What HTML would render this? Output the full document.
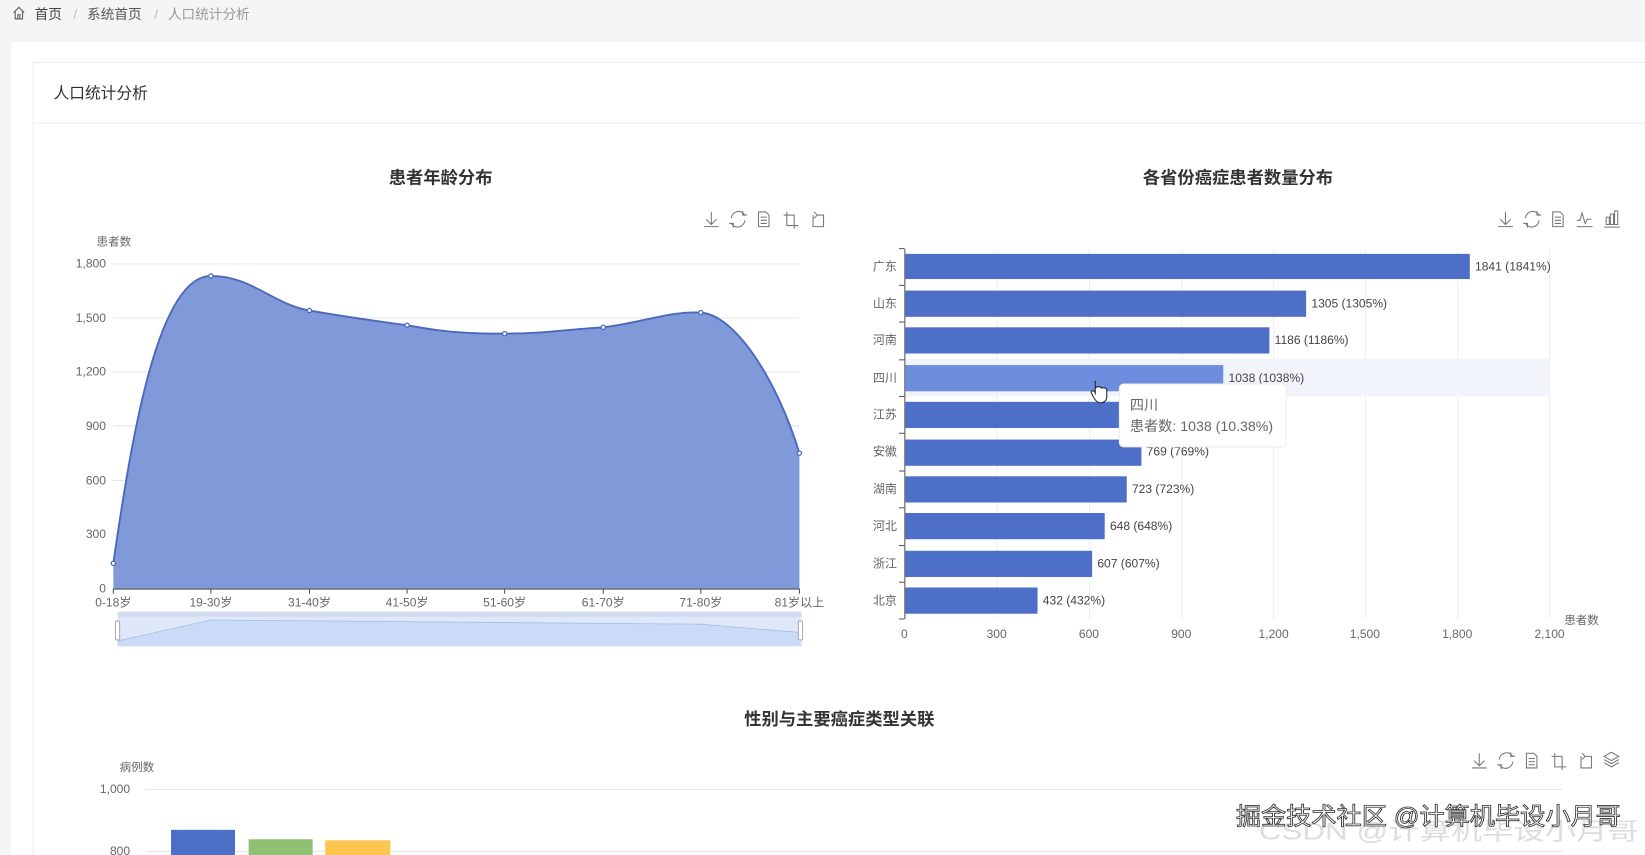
<!DOCTYPE html>
<html><head><meta charset="utf-8"><style>
html,body{margin:0;padding:0;background:#f4f5f7;overflow:hidden;width:1645px;height:855px}
svg{display:block}
text{font-family:"Liberation Sans","Noto Sans CJK SC",sans-serif}
</style></head><body>
<svg width="1645" height="855" viewBox="0 0 1568 815" preserveAspectRatio="none" xmlns="http://www.w3.org/2000/svg">
<rect x="0" y="0" width="1568" height="815" fill="#f4f5f7"/>
<g fill="none" stroke="#666" stroke-width="1.1"><path d="M13,12 L18,7 L23,12 M14.5,11 V18 H21.5 V11 M17,18 V14 H19 V18"/></g>
<g font-size="13">
<text x="33" y="18" fill="#444">首页</text>
<text x="70" y="18" fill="#bbb">/</text>
<text x="83" y="18" fill="#555">系统首页</text>
<text x="147" y="18" fill="#bbb">/</text>
<text x="160" y="18" fill="#999">人口统计分析</text>
</g>
<rect x="11" y="40" width="1570" height="790" fill="#fff"/>
<rect x="31.5" y="59.5" width="1560" height="780" fill="#fff" stroke="#eceef2"/>
<line x1="32" y1="117.5" x2="1568" y2="117.5" stroke="#ebeef5"/>
<text x="51" y="94" font-size="15" fill="#303133">人口统计分析</text>

<text x="420" y="175" font-size="16.5" font-weight="bold" fill="#333" text-anchor="middle">患者年龄分布</text>
<g fill="none" stroke="#777" stroke-width="1">
 <path d="M678,202 V214 M673,209 L678,214 L683,209 M671,216 H685"/>
 <path d="M710,205 A7,7 0 0 0 697,208 M697,213 A7,7 0 0 0 710,210 M708,201 V205 H712 M699,217 V213 H695"/>
 <path d="M723,202 H730 L733,205 V216 H723 Z M725,207 H731 M725,210 H731 M725,213 H731"/>
 <path d="M750,202 V215 H761 M747,205 H757 V218"/>
 <path d="M775,205 V216 H785 V205 H779 M779,205 L776,202 M779,205 L776,208"/>
</g>
<text x="92" y="234" font-size="11" fill="#666">患者数</text>
<g stroke="#e6e6e6" stroke-width="1">
 <line x1="108" y1="251.5" x2="762" y2="251.5"/><line x1="108" y1="303" x2="762" y2="303"/>
 <line x1="108" y1="354.5" x2="762" y2="354.5"/><line x1="108" y1="406" x2="762" y2="406"/>
 <line x1="108" y1="458" x2="762" y2="458"/><line x1="108" y1="509.5" x2="762" y2="509.5"/>
</g>
<g font-size="11.5" fill="#666" text-anchor="end">
 <text x="101" y="255">1,800</text><text x="101" y="307">1,500</text><text x="101" y="358">1,200</text>
 <text x="101" y="410">900</text><text x="101" y="462">600</text><text x="101" y="513">300</text><text x="101" y="565">0</text>
</g>
<path d="M108,537 C125,420 150,263 201,263 C240,263 260,290 295,296 C330,302 350,305 388,310 C420,316 440,318 481,318 C520,318 540,314 575,312 C610,308 640,296 668,298 C700,300 740,360 762,432 L762,561 L108,561 Z" fill="#8099d8"/>
<path d="M108,537 C125,420 150,263 201,263 C240,263 260,290 295,296 C330,302 350,305 388,310 C420,316 440,318 481,318 C520,318 540,314 575,312 C610,308 640,296 668,298 C700,300 740,360 762,432" fill="none" stroke="#4b68bd" stroke-width="1.8"/>
<g fill="#fff" stroke="#4b68bd" stroke-width="1.2">
 <circle cx="108" cy="537" r="2"/><circle cx="201" cy="263" r="2"/><circle cx="295" cy="296" r="2"/><circle cx="388" cy="310" r="2"/>
 <circle cx="481" cy="318" r="2"/><circle cx="575" cy="312" r="2"/><circle cx="668" cy="298" r="2"/><circle cx="762" cy="432" r="2"/>
</g>
<line x1="108" y1="561.5" x2="762" y2="561.5" stroke="#555"/>
<g stroke="#555"><line x1="108" y1="561" x2="108" y2="566"/><line x1="201" y1="561" x2="201" y2="566"/><line x1="295" y1="561" x2="295" y2="566"/><line x1="388" y1="561" x2="388" y2="566"/><line x1="481" y1="561" x2="481" y2="566"/><line x1="575" y1="561" x2="575" y2="566"/><line x1="668" y1="561" x2="668" y2="566"/><line x1="762" y1="561" x2="762" y2="566"/></g>
<g font-size="11.5" fill="#666" text-anchor="middle">
 <text x="108" y="578">0-18岁</text><text x="201" y="578">19-30岁</text><text x="295" y="578">31-40岁</text><text x="388" y="578">41-50岁</text>
 <text x="481" y="578">51-60岁</text><text x="575" y="578">61-70岁</text><text x="668" y="578">71-80岁</text><text x="762" y="578">81岁以上</text>
</g>
<rect x="112" y="583" width="652" height="33" fill="#dfe8f8"/>
<rect x="112" y="583" width="652" height="5" fill="#d3dcee"/>
<path d="M112,611 L201,591 L668,595 L764,603 L764,616 L112,616 Z" fill="#cbdaf7"/>
<path d="M112,611 L201,591 L668,595 L764,603" fill="none" stroke="#a8bde8" stroke-width="0.8"/>
<rect x="110" y="592" width="4" height="18" rx="1" fill="#fff" stroke="#aab"/>
<rect x="761" y="592" width="4" height="18" rx="1" fill="#fff" stroke="#aab"/>

<text x="1180" y="175" font-size="16.5" font-weight="bold" fill="#333" text-anchor="middle">各省份癌症患者数量分布</text>
<g fill="none" stroke="#777" stroke-width="1">
 <path d="M1435,202 V214 M1430,209 L1435,214 L1440,209 M1428,216 H1442"/>
 <path d="M1467,205 A7,7 0 0 0 1454,208 M1454,213 A7,7 0 0 0 1467,210 M1465,201 V205 H1469 M1456,217 V213 H1452"/>
 <path d="M1480,202 H1487 L1490,205 V216 H1480 Z M1482,207 H1488 M1482,210 H1488 M1482,213 H1488"/>
 <path d="M1503,210 H1506 L1508,203 L1511,213 L1513,209 H1517 M1503,216 H1518"/>
 <path d="M1531,207 H1534 V214 H1531 Z M1535,204 H1538 V214 H1535 Z M1539,201 H1542 V214 H1539 Z M1529,216.5 H1544"/>
</g>
<g stroke="#eceef2"><line x1="950.5" y1="237" x2="950.5" y2="590"/><line x1="1038.5" y1="237" x2="1038.5" y2="590"/><line x1="1126.5" y1="237" x2="1126.5" y2="590"/><line x1="1214" y1="237" x2="1214" y2="590"/><line x1="1301.5" y1="237" x2="1301.5" y2="590"/><line x1="1389.5" y1="237" x2="1389.5" y2="590"/><line x1="1477" y1="237" x2="1477" y2="590"/></g>
<rect x="862" y="342" width="615" height="36" fill="#f1f4fa"/>
<g fill="#4d6fc8">
 <rect x="863" y="242" width="538" height="24"/><rect x="863" y="277" width="382" height="25"/><rect x="863" y="312" width="347" height="25"/>
 <rect x="863" y="348" width="303" height="25" fill="#6d8ddf"/><rect x="863" y="383" width="210" height="25"/><rect x="863" y="419" width="225" height="25"/>
 <rect x="863" y="454" width="211" height="25"/><rect x="863" y="489" width="190" height="25"/><rect x="863" y="525" width="178" height="25"/><rect x="863" y="560" width="126" height="25"/>
</g>
<line x1="862.5" y1="237" x2="862.5" y2="590" stroke="#555"/>
<g stroke="#555"><line x1="857" y1="237" x2="862" y2="237"/><line x1="857" y1="272" x2="862" y2="272"/><line x1="857" y1="307" x2="862" y2="307"/><line x1="857" y1="343" x2="862" y2="343"/><line x1="857" y1="378" x2="862" y2="378"/><line x1="857" y1="413" x2="862" y2="413"/><line x1="857" y1="449" x2="862" y2="449"/><line x1="857" y1="484" x2="862" y2="484"/><line x1="857" y1="520" x2="862" y2="520"/><line x1="857" y1="555" x2="862" y2="555"/><line x1="857" y1="590" x2="862" y2="590"/></g>
<g font-size="11.5" fill="#666" text-anchor="end">
 <text x="855" y="258">广东</text><text x="855" y="293">山东</text><text x="855" y="328">河南</text><text x="855" y="364">四川</text><text x="855" y="399">江苏</text>
 <text x="855" y="434">安徽</text><text x="855" y="470">湖南</text><text x="855" y="505">河北</text><text x="855" y="541">浙江</text><text x="855" y="576">北京</text>
</g>
<g font-size="11.5" fill="#444">
 <text x="1406" y="258">1841 (1841%)</text><text x="1250" y="293">1305 (1305%)</text><text x="1215" y="328">1186 (1186%)</text><text x="1171" y="364">1038 (1038%)</text>
 <text x="1093" y="434">769 (769%)</text><text x="1079" y="470">723 (723%)</text><text x="1058" y="505">648 (648%)</text><text x="1046" y="541">607 (607%)</text><text x="994" y="576">432 (432%)</text>
</g>
<g font-size="11.5" fill="#666" text-anchor="middle">
 <text x="862" y="608">0</text><text x="950" y="608">300</text><text x="1038" y="608">600</text><text x="1126" y="608">900</text><text x="1214" y="608">1,200</text>
 <text x="1301" y="608">1,500</text><text x="1389" y="608">1,800</text><text x="1477" y="608">2,100</text>
</g>
<text x="1491" y="595" font-size="11" fill="#666">患者数</text>
<rect x="1067" y="366" width="159" height="60" rx="4" fill="#fff" stroke="#eee"/>
<text x="1077" y="391" font-size="13.5" fill="#666">四川</text>
<text x="1077" y="411" font-size="13.5" fill="#666">患者数: 1038 (10.38%)</text>
<path d="M1044,363 V376 M1044,370 C1046,368 1049,368 1050,370 C1052,369 1055,370 1055,372 V378 C1055,382 1052,384 1049,384 C1046,384 1044,382 1042,378 L1040,374 C1040,372 1042,372 1044,374" fill="#fff" stroke="#222" stroke-width="1"/>

<text x="800" y="691" font-size="16.5" font-weight="bold" fill="#333" text-anchor="middle">性别与主要癌症类型关联</text>
<g fill="none" stroke="#777" stroke-width="1">
 <path d="M1410,718 V730 M1405,725 L1410,730 L1415,725 M1403,732 H1417"/>
 <path d="M1442,721 A7,7 0 0 0 1429,724 M1429,729 A7,7 0 0 0 1442,726 M1440,717 V721 H1444 M1431,733 V729 H1427"/>
 <path d="M1455,718 H1462 L1465,721 V732 H1455 Z M1457,723 H1463 M1457,726 H1463 M1457,729 H1463"/>
 <path d="M1482,718 V731 H1493 M1479,721 H1489 V734"/>
 <path d="M1507,721 V732 H1517 V721 H1511 M1511,721 L1508,718 M1511,721 L1508,724"/>
 <path d="M1536,717 L1543,721 L1536,725 L1529,721 Z M1529,724 L1536,728 L1543,724 M1529,727 L1536,731 L1543,727"/>
</g>
<text x="114" y="735" font-size="11" fill="#666">病例数</text>
<line x1="139" y1="752.5" x2="1490" y2="752.5" stroke="#e6e6e6"/>
<line x1="139" y1="811.5" x2="1490" y2="811.5" stroke="#e6e6e6"/>
<text x="124" y="756" font-size="11.5" fill="#666" text-anchor="end">1,000</text>
<text x="124" y="815" font-size="11.5" fill="#666" text-anchor="end">800</text>
<rect x="163" y="791" width="61" height="30" fill="#4d6fc8"/>
<rect x="237" y="800" width="61" height="20" fill="#8fc074"/>
<rect x="310" y="801" width="62" height="20" fill="#fbc54e"/>
<text x="1200" y="800" font-size="23" fill="#ddd" textLength="362" lengthAdjust="spacingAndGlyphs">CSDN @计算机毕设小月哥</text>
<text x="1178" y="786" font-size="23" fill="#fff" stroke="#333" stroke-width="0.8" textLength="367" lengthAdjust="spacingAndGlyphs">掘金技术社区 @计算机毕设小月哥</text>
</svg>
</body></html>
